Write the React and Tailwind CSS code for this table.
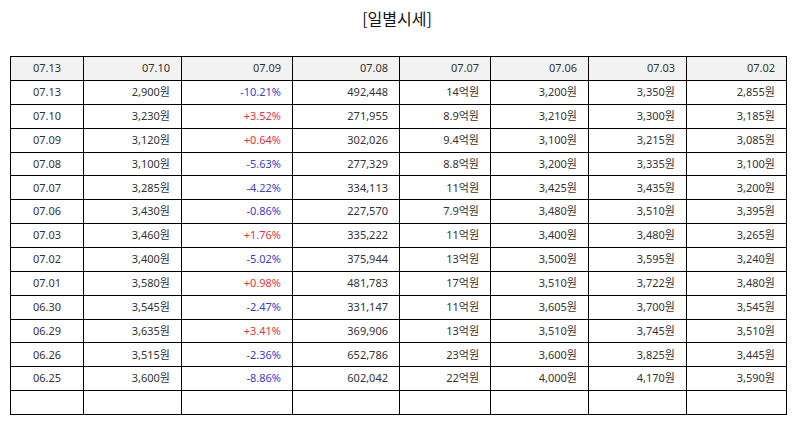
import React from 'react';

const header = ['07.13', '07.10', '07.09', '07.08', '07.07', '07.06', '07.03', '07.02'];

const rows = [
  ['07.13', '2,900원', '-10.21%', '492,448', '14억원', '3,200원', '3,350원', '2,855원'],
  ['07.10', '3,230원', '+3.52%', '271,955', '8.9억원', '3,210원', '3,300원', '3,185원'],
  ['07.09', '3,120원', '+0.64%', '302,026', '9.4억원', '3,100원', '3,215원', '3,085원'],
  ['07.08', '3,100원', '-5.63%', '277,329', '8.8억원', '3,200원', '3,335원', '3,100원'],
  ['07.07', '3,285원', '-4.22%', '334,113', '11억원', '3,425원', '3,435원', '3,200원'],
  ['07.06', '3,430원', '-0.86%', '227,570', '7.9억원', '3,480원', '3,510원', '3,395원'],
  ['07.03', '3,460원', '+1.76%', '335,222', '11억원', '3,400원', '3,480원', '3,265원'],
  ['07.02', '3,400원', '-5.02%', '375,944', '13억원', '3,500원', '3,595원', '3,240원'],
  ['07.01', '3,580원', '+0.98%', '481,783', '17억원', '3,510원', '3,722원', '3,480원'],
  ['06.30', '3,545원', '-2.47%', '331,147', '11억원', '3,605원', '3,700원', '3,545원'],
  ['06.29', '3,635원', '+3.41%', '369,906', '13억원', '3,510원', '3,745원', '3,510원'],
  ['06.26', '3,515원', '-2.36%', '652,786', '23억원', '3,600원', '3,825원', '3,445원'],
  ['06.25', '3,600원', '-8.86%', '602,042', '22억원', '4,000원', '4,170원', '3,590원'],
];

// column widths measured off the screenshot
const widths = ['w-[73px]', 'w-[98px]', 'w-[111px]', 'w-[107px]', 'w-[91px]', 'w-[98px]', 'w-[98px]', 'w-[100px]'];

const rateColor = (v) => (v.startsWith('+') ? 'text-[#e3343c]' : 'text-[#3b3bcf]');

export default function App() {
  return (
    <div className="w-[794px] h-[425px] bg-white text-[#333] font-['Noto_Sans','Noto_Sans_CJK_KR',sans-serif]">
      <div className="h-[56px] pt-[6px] text-center text-[16px] leading-[24px] text-[#111] font-['Noto_Sans_CJK_KR',sans-serif]">
        [일별시세]
      </div>
      <table className="ml-[10px] w-[777px] table-fixed border-collapse text-[11px]">
        <colgroup>
          {widths.map((w, i) => (
            <col key={i} className={w} />
          ))}
        </colgroup>
        <thead>
          <tr className="h-[24px] bg-[#f2f2f2]">
            {header.map((h, i) => (
              <th
                key={i}
                className={`border border-black font-normal px-[11px] p-0 ${i === 0 ? 'text-center' : 'text-right'}`}
              >
                {h}
              </th>
            ))}
          </tr>
        </thead>
        <tbody>
          {rows.map((r, ri) => (
            <tr key={ri} className="h-[23.87px]">
              {r.map((c, ci) => (
                <td
                  key={ci}
                  className={`border border-black px-[11px] p-0 ${ci === 0 ? 'text-center' : 'text-right'} ${ci === 2 ? rateColor(c) : ''}`}
                >
                  {c}
                </td>
              ))}
            </tr>
          ))}
          <tr className="h-[23.87px]">
            {header.map((_, ci) => (
              <td key={ci} className="border border-black" />
            ))}
          </tr>
        </tbody>
      </table>
    </div>
  );
}
